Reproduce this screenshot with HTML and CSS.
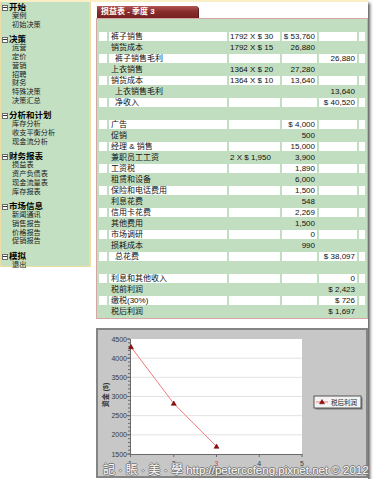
FILE: index.html
```html
<!DOCTYPE html>
<html lang="zh-CN">
<head>
<meta charset="utf-8">
<title>损益表 - 季度 3</title>
<link rel="stylesheet" href="styles.css">
</head>
<body>
<div class="page">
  <nav class="sidebar">
    <div class="group">
      <div class="head"><span class="box"></span>开始</div>
      <div class="item">案例</div>
      <div class="item">初始决策</div>
    </div>
    <div class="group">
      <div class="head"><span class="box"></span>决策</div>
      <div class="item">运营</div>
      <div class="item">定价</div>
      <div class="item">营销</div>
      <div class="item">招聘</div>
      <div class="item">财务</div>
      <div class="item">特殊决策</div>
      <div class="item">决策汇总</div>
    </div>
    <div class="group">
      <div class="head"><span class="box"></span>分析和计划</div>
      <div class="item">库存分析</div>
      <div class="item">收支平衡分析</div>
      <div class="item">现金流分析</div>
    </div>
    <div class="group">
      <div class="head"><span class="box"></span>财务报表</div>
      <div class="item">损益表</div>
      <div class="item">资产负债表</div>
      <div class="item">现金流量表</div>
      <div class="item">库存报表</div>
    </div>
    <div class="group">
      <div class="head"><span class="box"></span>市场信息</div>
      <div class="item">新闻通讯</div>
      <div class="item">销售报告</div>
      <div class="item">价格报告</div>
      <div class="item">促销报告</div>
    </div>
    <div class="group">
      <div class="head"><span class="box"></span>模拟</div>
      <div class="item">退出</div>
    </div>
  </nav>

  <main class="main">
    <div class="tab">损益表 - 季度 3</div>
    <div class="panel">
      <table class="ledger">
        <colgroup>
          <col class="k-bx"><col class="k-lb"><col class="k-c2"><col class="k-c3"><col class="k-c4"><col class="k-c5">
        </colgroup>
        <tr class="g"><td></td><td></td><td></td><td></td><td></td><td></td></tr>
        <tr class="w"><td></td><td class="lb">裤子销售</td><td class="c2">1792 X $ 30</td><td class="num">$ 53,760</td><td class="num"></td><td></td></tr>
        <tr class="g"><td></td><td class="lb">销货成本</td><td class="c2">1792 X $ 15</td><td class="num">26,880</td><td class="num"></td><td></td></tr>
        <tr class="w"><td></td><td class="lb ind">裤子销售毛利</td><td class="c2"></td><td class="num"></td><td class="num">26,880</td><td></td></tr>
        <tr class="g"><td></td><td class="lb">上衣销售</td><td class="c2">1364 X $ 20</td><td class="num">27,280</td><td class="num"></td><td></td></tr>
        <tr class="w"><td></td><td class="lb">销货成本</td><td class="c2">1364 X $ 10</td><td class="num">13,640</td><td class="num"></td><td></td></tr>
        <tr class="g"><td></td><td class="lb ind">上衣销售毛利</td><td class="c2"></td><td class="num"></td><td class="num">13,640</td><td></td></tr>
        <tr class="w"><td></td><td class="lb ind">净收入</td><td class="c2"></td><td class="num"></td><td class="num">$ 40,520</td><td></td></tr>
        <tr class="g"><td></td><td></td><td></td><td></td><td></td><td></td></tr>
        <tr class="w"><td></td><td class="lb">广告</td><td class="c2"></td><td class="num">$ 4,000</td><td class="num"></td><td></td></tr>
        <tr class="g"><td></td><td class="lb">促销</td><td class="c2"></td><td class="num">500</td><td class="num"></td><td></td></tr>
        <tr class="w"><td></td><td class="lb">经理 &amp; 销售</td><td class="c2"></td><td class="num">15,000</td><td class="num"></td><td></td></tr>
        <tr class="g"><td></td><td class="lb">兼职员工工资</td><td class="c2">2 X $ 1,950</td><td class="num">3,900</td><td class="num"></td><td></td></tr>
        <tr class="w"><td></td><td class="lb">工资税</td><td class="c2"></td><td class="num">1,890</td><td class="num"></td><td></td></tr>
        <tr class="g"><td></td><td class="lb">租赁和设备</td><td class="c2"></td><td class="num">6,000</td><td class="num"></td><td></td></tr>
        <tr class="w"><td></td><td class="lb">保险和电话费用</td><td class="c2"></td><td class="num">1,500</td><td class="num"></td><td></td></tr>
        <tr class="g"><td></td><td class="lb">利息花费</td><td class="c2"></td><td class="num">548</td><td class="num"></td><td></td></tr>
        <tr class="w"><td></td><td class="lb">信用卡花费</td><td class="c2"></td><td class="num">2,269</td><td class="num"></td><td></td></tr>
        <tr class="g"><td></td><td class="lb">其他费用</td><td class="c2"></td><td class="num">1,500</td><td class="num"></td><td></td></tr>
        <tr class="w"><td></td><td class="lb">市场调研</td><td class="c2"></td><td class="num">0</td><td class="num"></td><td></td></tr>
        <tr class="g"><td></td><td class="lb">损耗成本</td><td class="c2"></td><td class="num">990</td><td class="num"></td><td></td></tr>
        <tr class="w"><td></td><td class="lb ind">总花费</td><td class="c2"></td><td class="num"></td><td class="num">$ 38,097</td><td></td></tr>
        <tr class="g"><td></td><td></td><td></td><td></td><td></td><td></td></tr>
        <tr class="w"><td></td><td class="lb">利息和其他收入</td><td class="c2"></td><td class="num"></td><td class="num">0</td><td></td></tr>
        <tr class="g"><td></td><td class="lb">税前利润</td><td class="c2"></td><td class="num"></td><td class="num">$ 2,423</td><td></td></tr>
        <tr class="w"><td></td><td class="lb">缴税(30%)</td><td class="c2"></td><td class="num"></td><td class="num">$ 726</td><td></td></tr>
        <tr class="g"><td></td><td class="lb">税后利润</td><td class="c2"></td><td class="num"></td><td class="num">$ 1,697</td><td></td></tr>
      </table>
    </div>

    <div class="chart">
      <svg class="plot" width="268" height="146" viewBox="0 0 268 146">
        <rect x="33" y="9" width="171" height="115" fill="#ffffff"/>
        <path class="grid" d="M33 28.17H204M33 47.33H204M33 66.5H204M33 85.67H204M33 104.83H204"/>
        <path class="axis" d="M32.5 9V124.5H204.5"/>
        <path class="axis" d="M30 9h2m-2 3.833h2m-2 3.833h2m-2 3.833h2m-2 3.833h2m-2 3.833h2m-2 3.833h2m-2 3.833h2m-2 3.833h2m-2 3.833h2m-2 3.833h2m-2 3.833h2m-2 3.833h2m-2 3.833h2m-2 3.833h2m-2 3.833h2m-2 3.833h2m-2 3.833h2m-2 3.833h2m-2 3.833h2m-2 3.833h2m-2 3.833h2m-2 3.833h2m-2 3.833h2m-2 3.833h2m-2 3.833h2m-2 3.833h2m-2 3.833h2m-2 3.833h2m-2 3.833h2m-2 3.833h2"/>
        <path class="axis" d="M29 9h3M29 28.17h3M29 47.33h3M29 66.5h3M29 85.67h3M29 104.83h3M29 124h3"/>
        <path class="axis" d="M32.5 124v3M75.75 124v3M118.5 124v3M161.25 124v3M204 124v3"/>
        <polyline class="series" points="33,17 75.75,73.5 118.5,116.5"/>
        <path class="mark" d="M33 14.5L35.5 18.8H30.5ZM75.75 71L78.25 75.3H73.25ZM118.5 114L121 118.3H116Z"/>
        <g class="ylab">
          <text x="29" y="11.5">4500</text>
          <text x="29" y="30.7">4000</text>
          <text x="29" y="49.8">3500</text>
          <text x="29" y="69">3000</text>
          <text x="29" y="88.2">2500</text>
          <text x="29" y="107.3">2000</text>
          <text x="29" y="126.5">1500</text>
        </g>
        <g class="xlab">
          <text x="32" y="136">1</text>
          <text x="75.75" y="136">2</text>
          <text x="118.5" y="136" class="cur">3</text>
          <text x="161.25" y="136">4</text>
          <text x="204" y="136">5</text>
          <text x="118.5" y="144">季度</text>
        </g>
        <text class="ytitle" transform="translate(9.5 65) rotate(-90)">资金 ($)</text>
        <rect x="217.5" y="67.5" width="47" height="12" fill="#7a7a7a"/>
        <rect x="216" y="66" width="47" height="12" fill="#f3f3f3" stroke="#555" stroke-width="1"/>
        <path class="series" d="M218 72h12"/>
        <path class="mark" d="M224 69.5L226.5 73.8H221.5Z"/>
        <text class="legend" x="233" y="74.5">税后利润</text>
      </svg>
      <div class="watermark"><span class="cjk">記 · 賬 · 美 · 學</span> http://peterccfeng.pixnet.net © 2012</div>
    </div>
  </main>
</div>
</body>
</html>
```

FILE: styles.css
```css
* { box-sizing: border-box; }

html, body {
  margin: 0;
  padding: 0;
  background: #ffffff;
}

body {
  font-family: "Liberation Sans", "Noto Sans CJK SC", sans-serif;
  color: #111111;
}

.page {
  width: 368px;
  height: 479px;
  border-top: 2px solid #fbefc6;
  background: #ffffff;
  display: flex;
  align-items: flex-start;
  box-shadow: 2px 3px 3px rgba(0, 0, 0, 0.65);
}

/* ---------- sidebar ---------- */
.sidebar {
  flex: none;
  width: 91px;
  height: 265px;
  background: #c4e0c2;
  border: 1px solid #ecdea4;
  border-top: 0;
  border-right-width: 2px;
  padding-top: 1px;
}

.group + .group { margin-top: 6px; }

.head {
  display: flex;
  align-items: center;
  gap: 1px;
  padding-left: 1px;
  font-size: 8.5px;
  line-height: 9px;
  font-weight: bold;
  color: #000000;
}

.box {
  flex: none;
  width: 6px;
  height: 6px;
  border: 1px solid #6a6a6a;
  background: linear-gradient(#333333, #333333) center / 4px 1px no-repeat, #ffffff;
}

.item {
  padding-left: 11px;
  font-size: 7.2px;
  line-height: 8.7px;
  color: #1a1a1a;
}

/* ---------- main ---------- */
.main {
  flex: none;
  width: 272px;
  margin-left: 5px;
  display: flex;
  flex-direction: column;
}

.tab {
  width: 102px;
  height: 12px;
  margin: 4px 0 0 1px;
  padding-left: 4px;
  background: linear-gradient(#b25656, #8a2c2c 45%, #762020);
  border-radius: 0 4px 0 0;
  border-right: 1px solid #5a1a1a;
  color: #ffffff;
  font-size: 8px;
  line-height: 12px;
  font-weight: bold;
  white-space: nowrap;
}

.panel {
  border: 1px solid #d4a6a6;
  background: #c2dec0;
}

.ledger {
  width: 270px;
  border-collapse: separate;
  border-spacing: 2px;
  table-layout: fixed;
  font-size: 8px;
  line-height: 9px;
  color: #111111;
}

.k-bx { width: 8px; }
.k-lb { width: 118px; }
.k-c2 { width: 51px; }
.k-c3 { width: 35px; }
.k-c4 { width: 38px; }
.k-c5 { width: 6px; }

.ledger td {
  height: 9px;
  padding: 0;
  white-space: nowrap;
  overflow: hidden;
}

.ledger tr.w td { background: #ffffff; }

.ledger td.lb { padding-left: 2px; }
.ledger td.lb.ind { padding-left: 6px; }
.ledger td.c2 { padding-left: 1px; }
.ledger td.num { text-align: right; padding-right: 2px; }

/* ---------- chart ---------- */
.chart {
  position: relative;
  height: 150px;
  margin-top: 9px;
  border: 2px solid #848484;
  background: #c7c7c7;
}

.plot { display: block; }

.plot .grid { stroke: #e2e2e2; stroke-width: 1; fill: none; }
.plot .axis { stroke: #6a6a6a; stroke-width: 1; fill: none; }
.plot .series { stroke: #f27a7a; stroke-width: 1; fill: none; }
.plot .mark { fill: #9a0a0a; stroke: #5a0000; stroke-width: 0.5; }

.plot text {
  font-family: "Liberation Sans", "Noto Sans CJK SC", sans-serif;
  fill: #3a3a3a;
}

.plot .ylab text { font-size: 7px; text-anchor: end; }
.plot .xlab text { font-size: 7px; text-anchor: middle; }
.plot .xlab .cur { fill: #e03c3c; }
.plot .ytitle { font-size: 7px; font-weight: bold; text-anchor: middle; fill: #333333; }
.plot .legend { font-size: 6.5px; fill: #222222; }

.watermark {
  position: absolute;
  left: 5px;
  top: 133px;
  white-space: nowrap;
  font-family: "Liberation Sans", "Noto Sans CJK TC", sans-serif;
  font-size: 11.5px;
  line-height: 14px;
  color: #fbfbfb;
  text-shadow: 1px 0 0 #7a7a7a, -1px 0 0 #7a7a7a, 0 1px 0 #7a7a7a, 0 -1px 0 #7a7a7a;
}

.watermark .cjk { font-size: 12px; }
```
